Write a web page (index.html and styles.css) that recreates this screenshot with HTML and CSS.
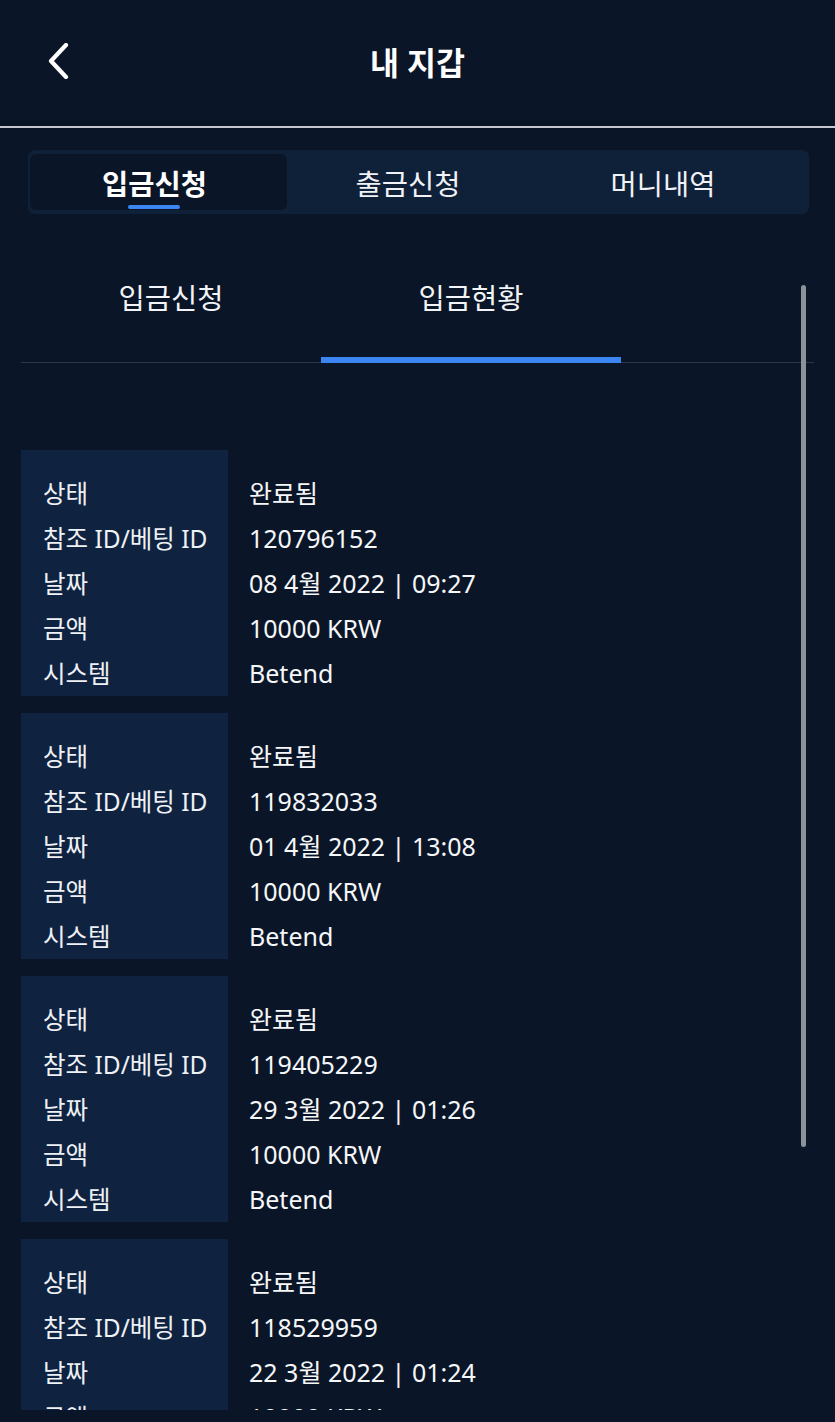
FILE: index.html
```html
<!DOCTYPE html>
<html lang="ko">
<head>
<meta charset="utf-8">
<title>내 지갑</title>
<link rel="stylesheet" href="styles.css">
</head>
<body>
<div class="app">
  <header class="topbar">
    <button class="back" aria-label="back">
      <svg width="24" height="36" viewBox="0 0 24 36"><polyline points="20,2 5,18 20,34" fill="none" stroke="#ffffff" stroke-width="4.2" stroke-linecap="round" stroke-linejoin="round"/></svg>
    </button>
    <h1 class="title">내 지갑</h1>
    <span></span>
  </header>

  <nav class="segment">
    <div class="seg active">입금신청<span class="seg-bar"></span></div>
    <div class="seg">출금신청</div>
    <div class="seg">머니내역</div>
  </nav>

  <main class="scroll">
    <div class="subtabs">
      <div class="subtab">입금신청</div>
      <div class="subtab on">입금현황</div>
    </div>

    <div class="list">
      <section class="card">
        <div class="labels"><div>상태</div><div>참조 ID/베팅 ID</div><div>날짜</div><div>금액</div><div>시스템</div></div>
        <div class="values"><div>완료됨</div><div>120796152</div><div>08 4월 2022 | 09:27</div><div>10000 KRW</div><div>Betend</div></div>
      </section>
      <section class="card">
        <div class="labels"><div>상태</div><div>참조 ID/베팅 ID</div><div>날짜</div><div>금액</div><div>시스템</div></div>
        <div class="values"><div>완료됨</div><div>119832033</div><div>01 4월 2022 | 13:08</div><div>10000 KRW</div><div>Betend</div></div>
      </section>
      <section class="card">
        <div class="labels"><div>상태</div><div>참조 ID/베팅 ID</div><div>날짜</div><div>금액</div><div>시스템</div></div>
        <div class="values"><div>완료됨</div><div>119405229</div><div>29 3월 2022 | 01:26</div><div>10000 KRW</div><div>Betend</div></div>
      </section>
      <section class="card">
        <div class="labels"><div>상태</div><div>참조 ID/베팅 ID</div><div>날짜</div><div>금액</div><div>시스템</div></div>
        <div class="values"><div>완료됨</div><div>118529959</div><div>22 3월 2022 | 01:24</div><div>10000 KRW</div><div>Betend</div></div>
      </section>
    </div>

    <div class="scrollbar"></div>
  </main>
</div>
</body>
</html>
```

FILE: styles.css
```css
* { box-sizing: border-box; }
html, body { margin: 0; padding: 0; }
body {
  background: #0a1628;
  color: #f3f5f8;
  font-family: "Noto Sans", "Noto Sans CJK KR", sans-serif;
  width: 835px;
  height: 1422px;
  overflow: hidden;
}
.app { display: flex; flex-direction: column; height: 1422px; }

.topbar {
  height: 128px;
  display: grid;
  grid-template-columns: 1fr auto 1fr;
  align-items: center;
  border-bottom: 2px solid #c6cad0;
  background: #0a1527;
  padding-bottom: 4px;
}
.back {
  justify-self: start;
  margin-left: 46px;
  background: none;
  border: 0;
  padding: 0;
  display: flex;
}
.title {
  margin: 0;
  font-size: 31.5px;
  font-weight: 700;
  color: #ffffff;
  letter-spacing: 0;
}

.segment {
  margin: 22px 26px 0 28px;
  height: 64px;
  padding: 4px 2px;
  background: #0f2039;
  border-radius: 7px;
  display: grid;
  grid-template-columns: 257px 1fr 1fr;
}
.seg {
  position: relative;
  display: flex;
  align-items: center;
  justify-content: center;
  font-size: 28.5px;
  font-weight: 400;
  color: #f0f2f6;
  padding-right: 18px;
}
.seg:last-child { padding-right: 28px; }
.seg.active {
  background: #0a1527;
  border-radius: 6px;
  font-weight: 700;
  color: #ffffff;
  padding-right: 8px;
}
.seg-bar {
  position: absolute;
  left: 98px;
  bottom: 1px;
  width: 52px;
  height: 4px;
  border-radius: 2px;
  background: #3b86f2;
}

.scroll {
  position: relative;
  height: 1196px;
  overflow: hidden;
  padding: 58px 0 0 21px;
}
.subtabs {
  display: flex;
  width: 793px;
  height: 91px;
  border-bottom: 1px solid #2a3748;
}
.subtab {
  width: 300px;
  text-align: center;
  font-size: 28.5px;
  line-height: 52px;
  color: #f2f4f7;
}
.subtab.on {
  border-bottom: 6px solid #3b86f2;
  margin-bottom: -1px;
}

.list {
  margin-top: 87px;
  display: flex;
  flex-direction: column;
  gap: 17px;
}
.card {
  display: grid;
  grid-template-columns: 207px 1fr;
  font-size: 25px;
  line-height: 45px;
}
.labels {
  background: #0f2340;
  padding: 21px 0 0 22px;
  color: #eef1f5;
  font-size: 24.5px;
}
.values {
  padding: 21px 0 0 21px;
  color: #f6f7f9;
}

.scrollbar {
  position: absolute;
  left: 801px;
  top: 71px;
  width: 5px;
  height: 862px;
  border-radius: 3px;
  background: #8a929c;
}
```
